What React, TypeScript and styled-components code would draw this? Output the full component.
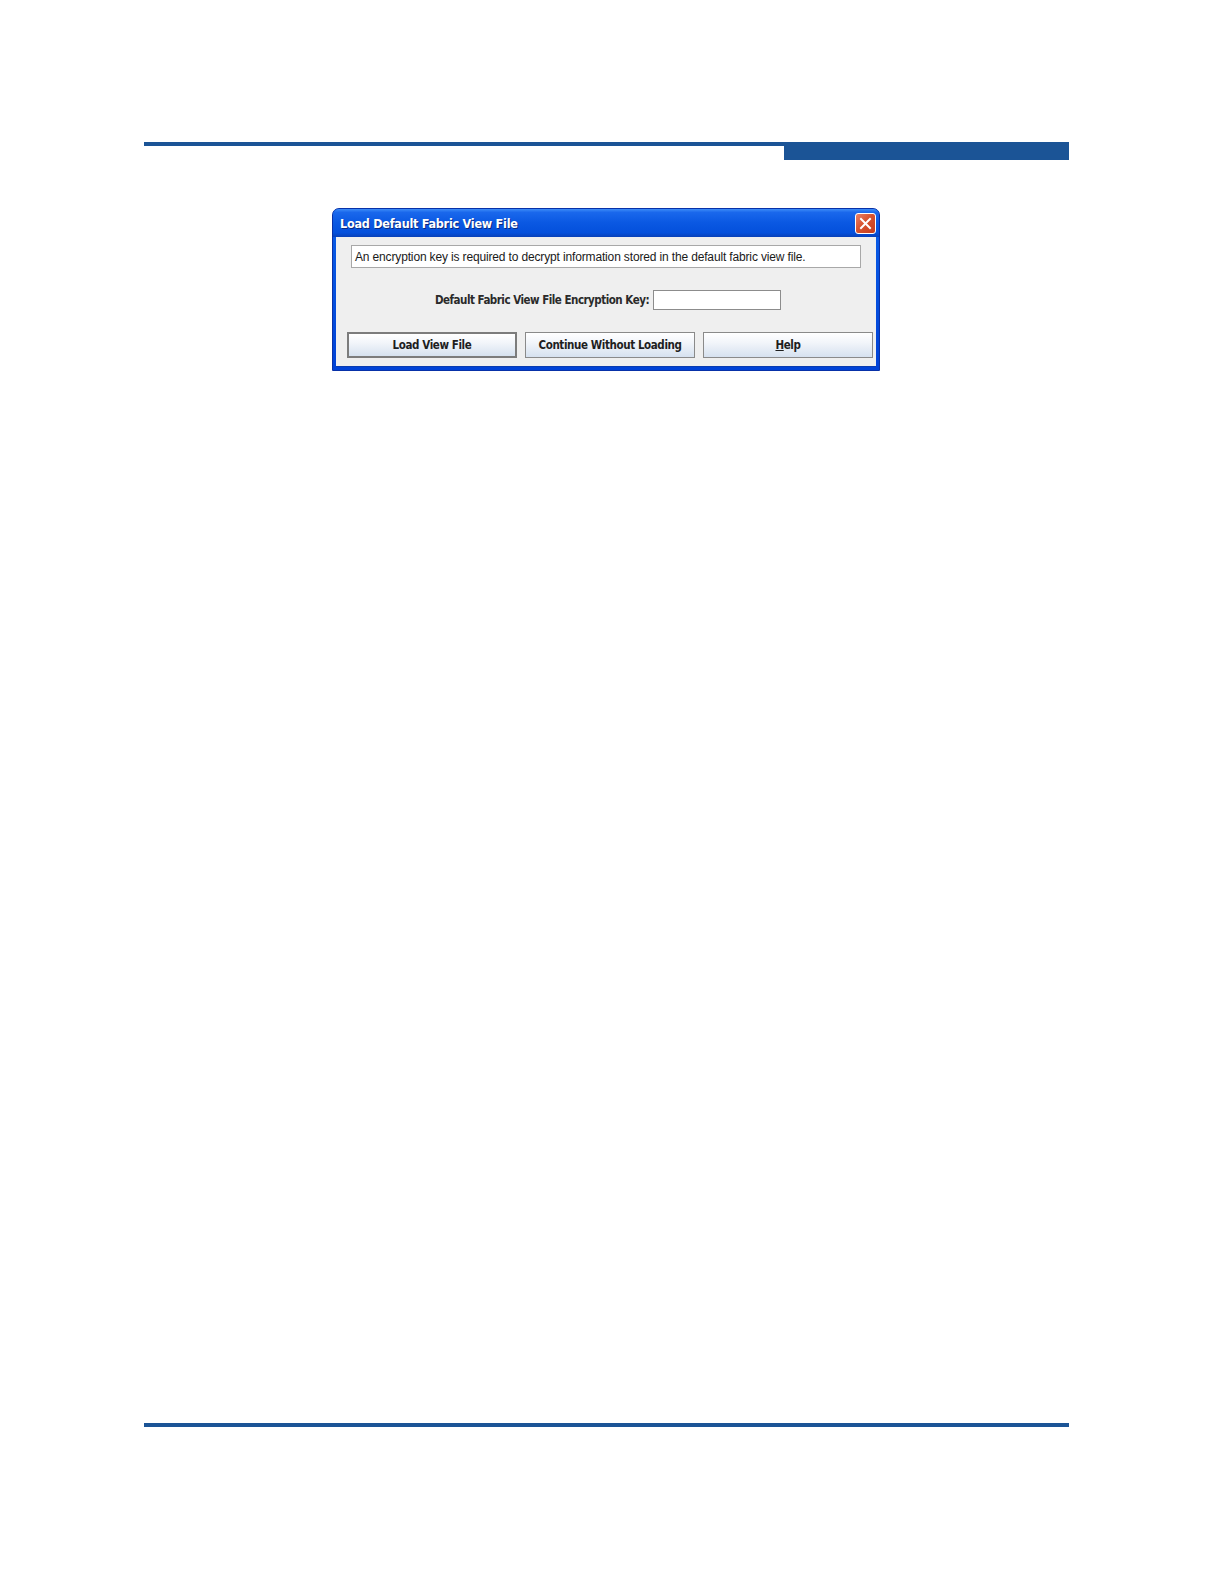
import React from "react";
import styled, { createGlobalStyle } from "styled-components";

const GlobalStyle = createGlobalStyle`
  html, body {
    margin: 0;
    padding: 0;
    background: #ffffff;
  }
  body {
    font-family: "Liberation Sans", Arial, sans-serif;
  }
`;

const Page = styled.div`
  width: 1224px;
  display: flex;
  flex-direction: column;
  padding: 142px 155px 0 144px;
  box-sizing: border-box;
`;

const Header = styled.div`
  display: flex;
  align-items: flex-start;
  height: 18px;
`;

const HeaderLine = styled.div`
  flex: 1;
  height: 4px;
  background: #1b5496;
`;

const HeaderBlock = styled.div`
  width: 285px;
  height: 18px;
  background: #1b5496;
`;

const DialogWrap = styled.div`
  display: flex;
  padding: 48px 0 0 188px;
`;

const Dialog = styled.div`
  width: 548px;
  height: 163px;
  box-sizing: border-box;
  display: flex;
  flex-direction: column;
  background: linear-gradient(to bottom, #0a5ee8, #0042d6);
  border-radius: 7px 7px 0 0;
  border: 1px solid #0831a8;
  padding: 0 3px 3px 3px;
`;

const TitleBar = styled.div`
  height: 28px;
  display: flex;
  align-items: center;
  justify-content: space-between;
  padding: 0 0 0 4px;
  background: linear-gradient(
    to bottom,
    #3d8cf7 0%,
    #1a68ec 12%,
    #0a58e2 50%,
    #0450dc 85%,
    #0840b8 100%
  );
  margin: 0 -3px;
  border-radius: 6px 6px 0 0;
`;

const Title = styled.span`
  color: #ffffff;
  font-family: "DejaVu Sans Condensed", "Liberation Sans", sans-serif;
  font-weight: bold;
  font-size: 12.5px;
  letter-spacing: -0.25px;
  text-shadow: 1px 1px 0 #0a2a80;
  padding-left: 3px;
`;

const CloseButton = styled.div`
  width: 21px;
  height: 21px;
  margin-right: 3px;
  box-sizing: border-box;
  border: 1px solid #ffffff;
  border-radius: 3px;
  background: linear-gradient(135deg, #e8826a 0%, #d8532f 45%, #c53c1c 100%);
  display: flex;
  align-items: center;
  justify-content: center;
`;

const Body = styled.div`
  flex: 1;
  background: #efefef;
  display: flex;
  flex-direction: column;
  padding: 8px 7px 8px 8px;
  border-bottom: 1px solid #0a3cb0;
`;

const Message = styled.div`
  height: 23px;
  box-sizing: border-box;
  margin: 0 8px 0 7px;
  border: 1px solid #a8a8a8;
  background: #ffffff;
  font-size: 12px;
  font-family: "Liberation Sans", Arial, sans-serif;
  color: #1a1a1a;
  display: flex;
  align-items: center;
  padding-left: 3px;
  letter-spacing: -0.15px;
`;

const KeyRow = styled.div`
  display: flex;
  align-items: center;
  justify-content: center;
  gap: 4px;
  margin-top: 22px;
  padding-left: 3px;
`;

const KeyLabel = styled.span`
  font-family: "DejaVu Sans Condensed", "Liberation Sans", sans-serif;
  font-weight: bold;
  font-size: 11.5px;
  color: #2a2a2a;
  letter-spacing: -0.5px;
`;

const KeyInput = styled.div`
  width: 128px;
  height: 20px;
  box-sizing: border-box;
  border: 1px solid #8c8c8c;
  background: #ffffff;
`;

const ButtonRow = styled.div`
  display: grid;
  grid-template-columns: repeat(3, 170px);
  gap: 8px;
  margin-top: 22px;
  padding-left: 3px;
`;

const Button = styled.div<{ focused?: boolean }>`
  height: 26px;
  box-sizing: border-box;
  border: ${(p) => (p.focused ? "2px solid #7c7c7c" : "1px solid #8a8a8a")};
  background: linear-gradient(to bottom, #ffffff 0%, #f2f5fa 40%, #d6e1ef 100%);
  display: flex;
  align-items: center;
  justify-content: center;
  font-family: "DejaVu Sans Condensed", "Liberation Sans", sans-serif;
  font-weight: bold;
  font-size: 11.5px;
  color: #1e1e1e;
  letter-spacing: -0.4px;
`;

const Underlined = styled.span`
  text-decoration: underline;
`;

const Footer = styled.div`
  margin-top: 1052px;
  height: 4px;
  background: #1b5496;
`;

const App = () => {
  return (
    <>
      <GlobalStyle />
      <Page>
        <Header>
          <HeaderLine />
          <HeaderBlock />
        </Header>
        <DialogWrap>
          <Dialog>
            <TitleBar>
              <Title>Load Default Fabric View File</Title>
              <CloseButton>
                <svg width="13" height="13" viewBox="0 0 13 13">
                  <path
                    d="M2 2 L11 11 M11 2 L2 11"
                    stroke="#ffffff"
                    strokeWidth="2"
                    strokeLinecap="square"
                  />
                </svg>
              </CloseButton>
            </TitleBar>
            <Body>
              <Message>
                An encryption key is required to decrypt information stored in
                the default fabric view file.
              </Message>
              <KeyRow>
                <KeyLabel>Default Fabric View File Encryption Key:</KeyLabel>
                <KeyInput />
              </KeyRow>
              <ButtonRow>
                <Button focused>Load View File</Button>
                <Button>Continue Without Loading</Button>
                <Button>
                  <Underlined>H</Underlined>elp
                </Button>
              </ButtonRow>
            </Body>
          </Dialog>
        </DialogWrap>
        <Footer />
      </Page>
    </>
  );
};

export default App;
